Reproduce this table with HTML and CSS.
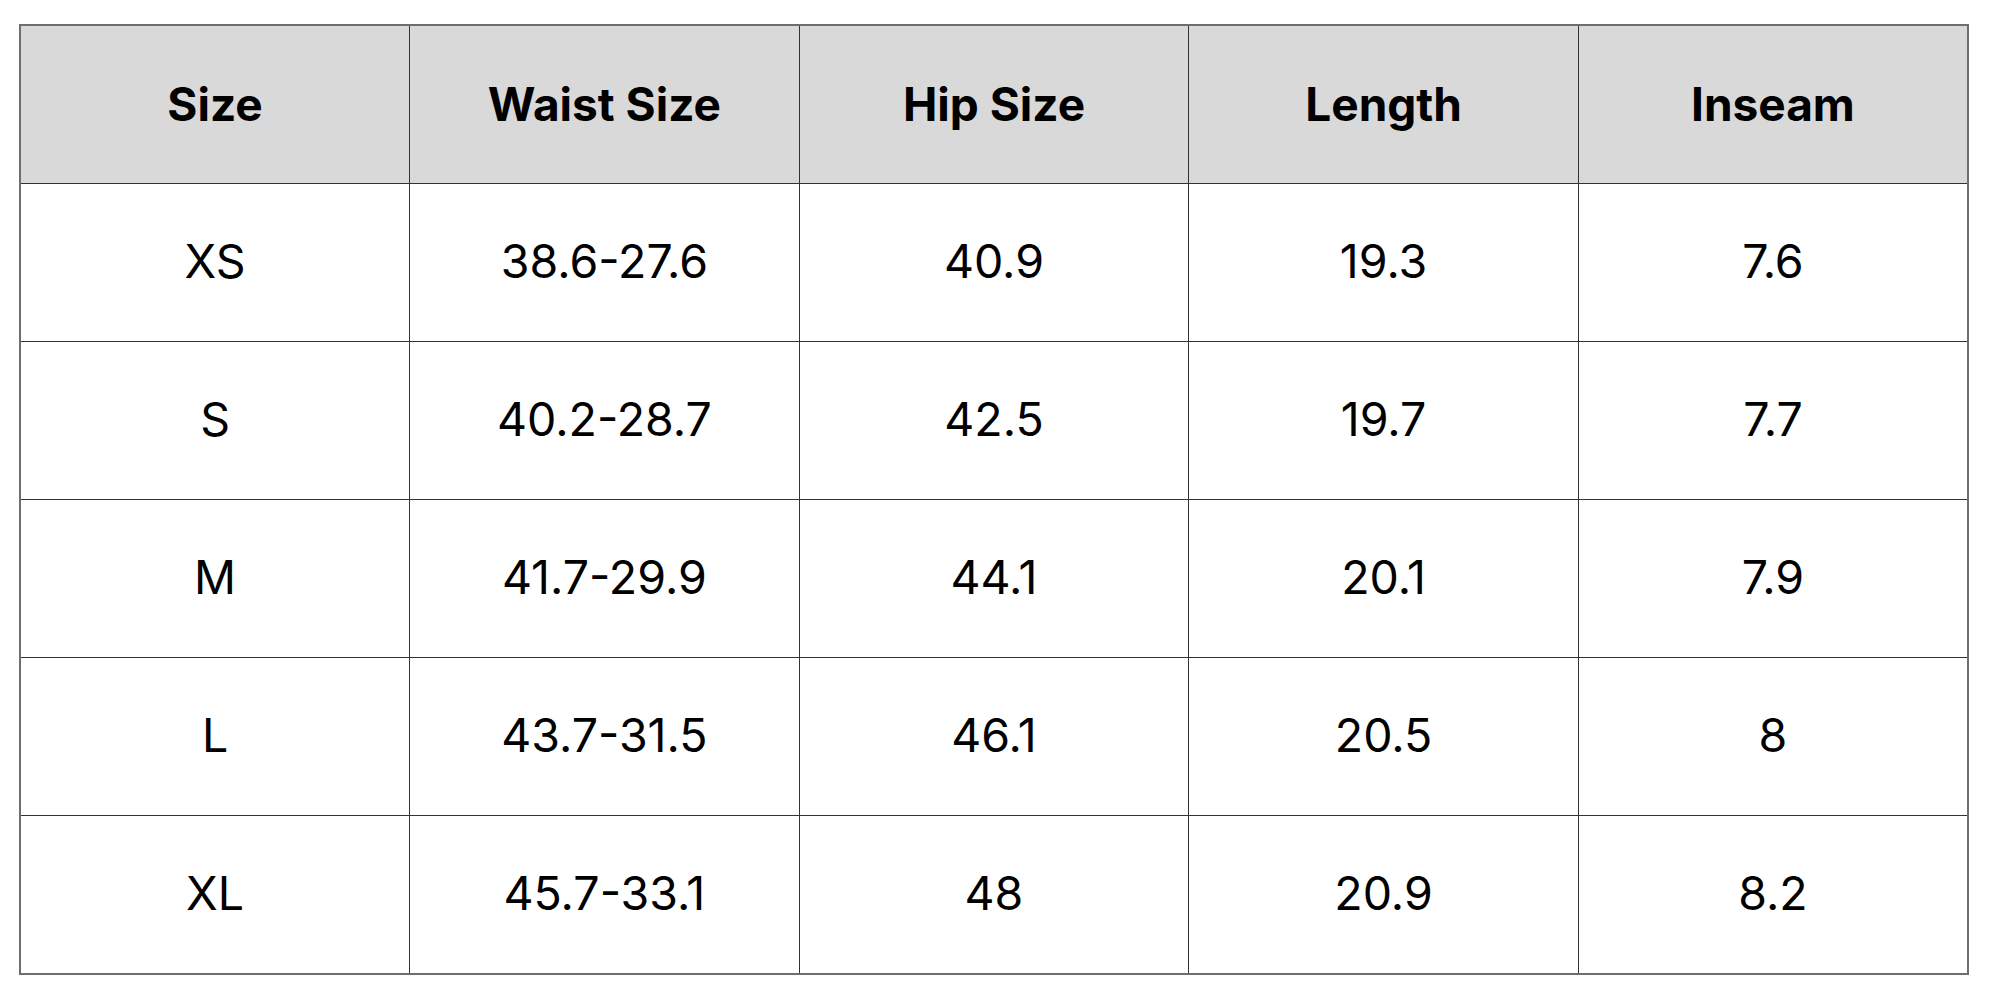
FILE: index.html
```html
<!DOCTYPE html>
<html>
<head>
<meta charset="utf-8">
<link rel="stylesheet" href="styles.css">
</head>
<body>
<table class="size-table">
  <thead>
    <tr><th>Size</th><th>Waist Size</th><th>Hip Size</th><th>Length</th><th>Inseam</th></tr>
  </thead>
  <tbody>
    <tr><td>XS</td><td>38.6-27.6</td><td>40.9</td><td>19.3</td><td>7.6</td></tr>
    <tr><td>S</td><td>40.2-28.7</td><td>42.5</td><td>19.7</td><td>7.7</td></tr>
    <tr><td>M</td><td>41.7-29.9</td><td>44.1</td><td>20.1</td><td>7.9</td></tr>
    <tr><td>L</td><td>43.7-31.5</td><td>46.1</td><td>20.5</td><td>8</td></tr>
    <tr><td>XL</td><td>45.7-33.1</td><td>48</td><td>20.9</td><td>8.2</td></tr>
  </tbody>
</table>
</body>
</html>
```

FILE: styles.css
```css
html, body {
  margin: 0;
  padding: 0;
  background: #ffffff;
}
body {
  padding: 24px 0 0 19px;
  font-family: Inter, "Noto Sans", sans-serif;
  color: #000;
}
.size-table {
  border-collapse: collapse;
  width: 1950px;
  table-layout: fixed;
  border: 2px solid #6e6e6e;
}
.size-table th,
.size-table td {
  border: 1px solid #333;
  padding: 0;
  text-align: center;
  vertical-align: middle;
}
.size-table th {
  background: #d9d9d9;
  font-weight: 700;
  font-size: 46px;
  height: 155px;
  padding-bottom: 2px;
}
.size-table td {
  font-weight: 400;
  font-size: 46.5px;
  height: 153px;
  padding-bottom: 4px;
}
```
